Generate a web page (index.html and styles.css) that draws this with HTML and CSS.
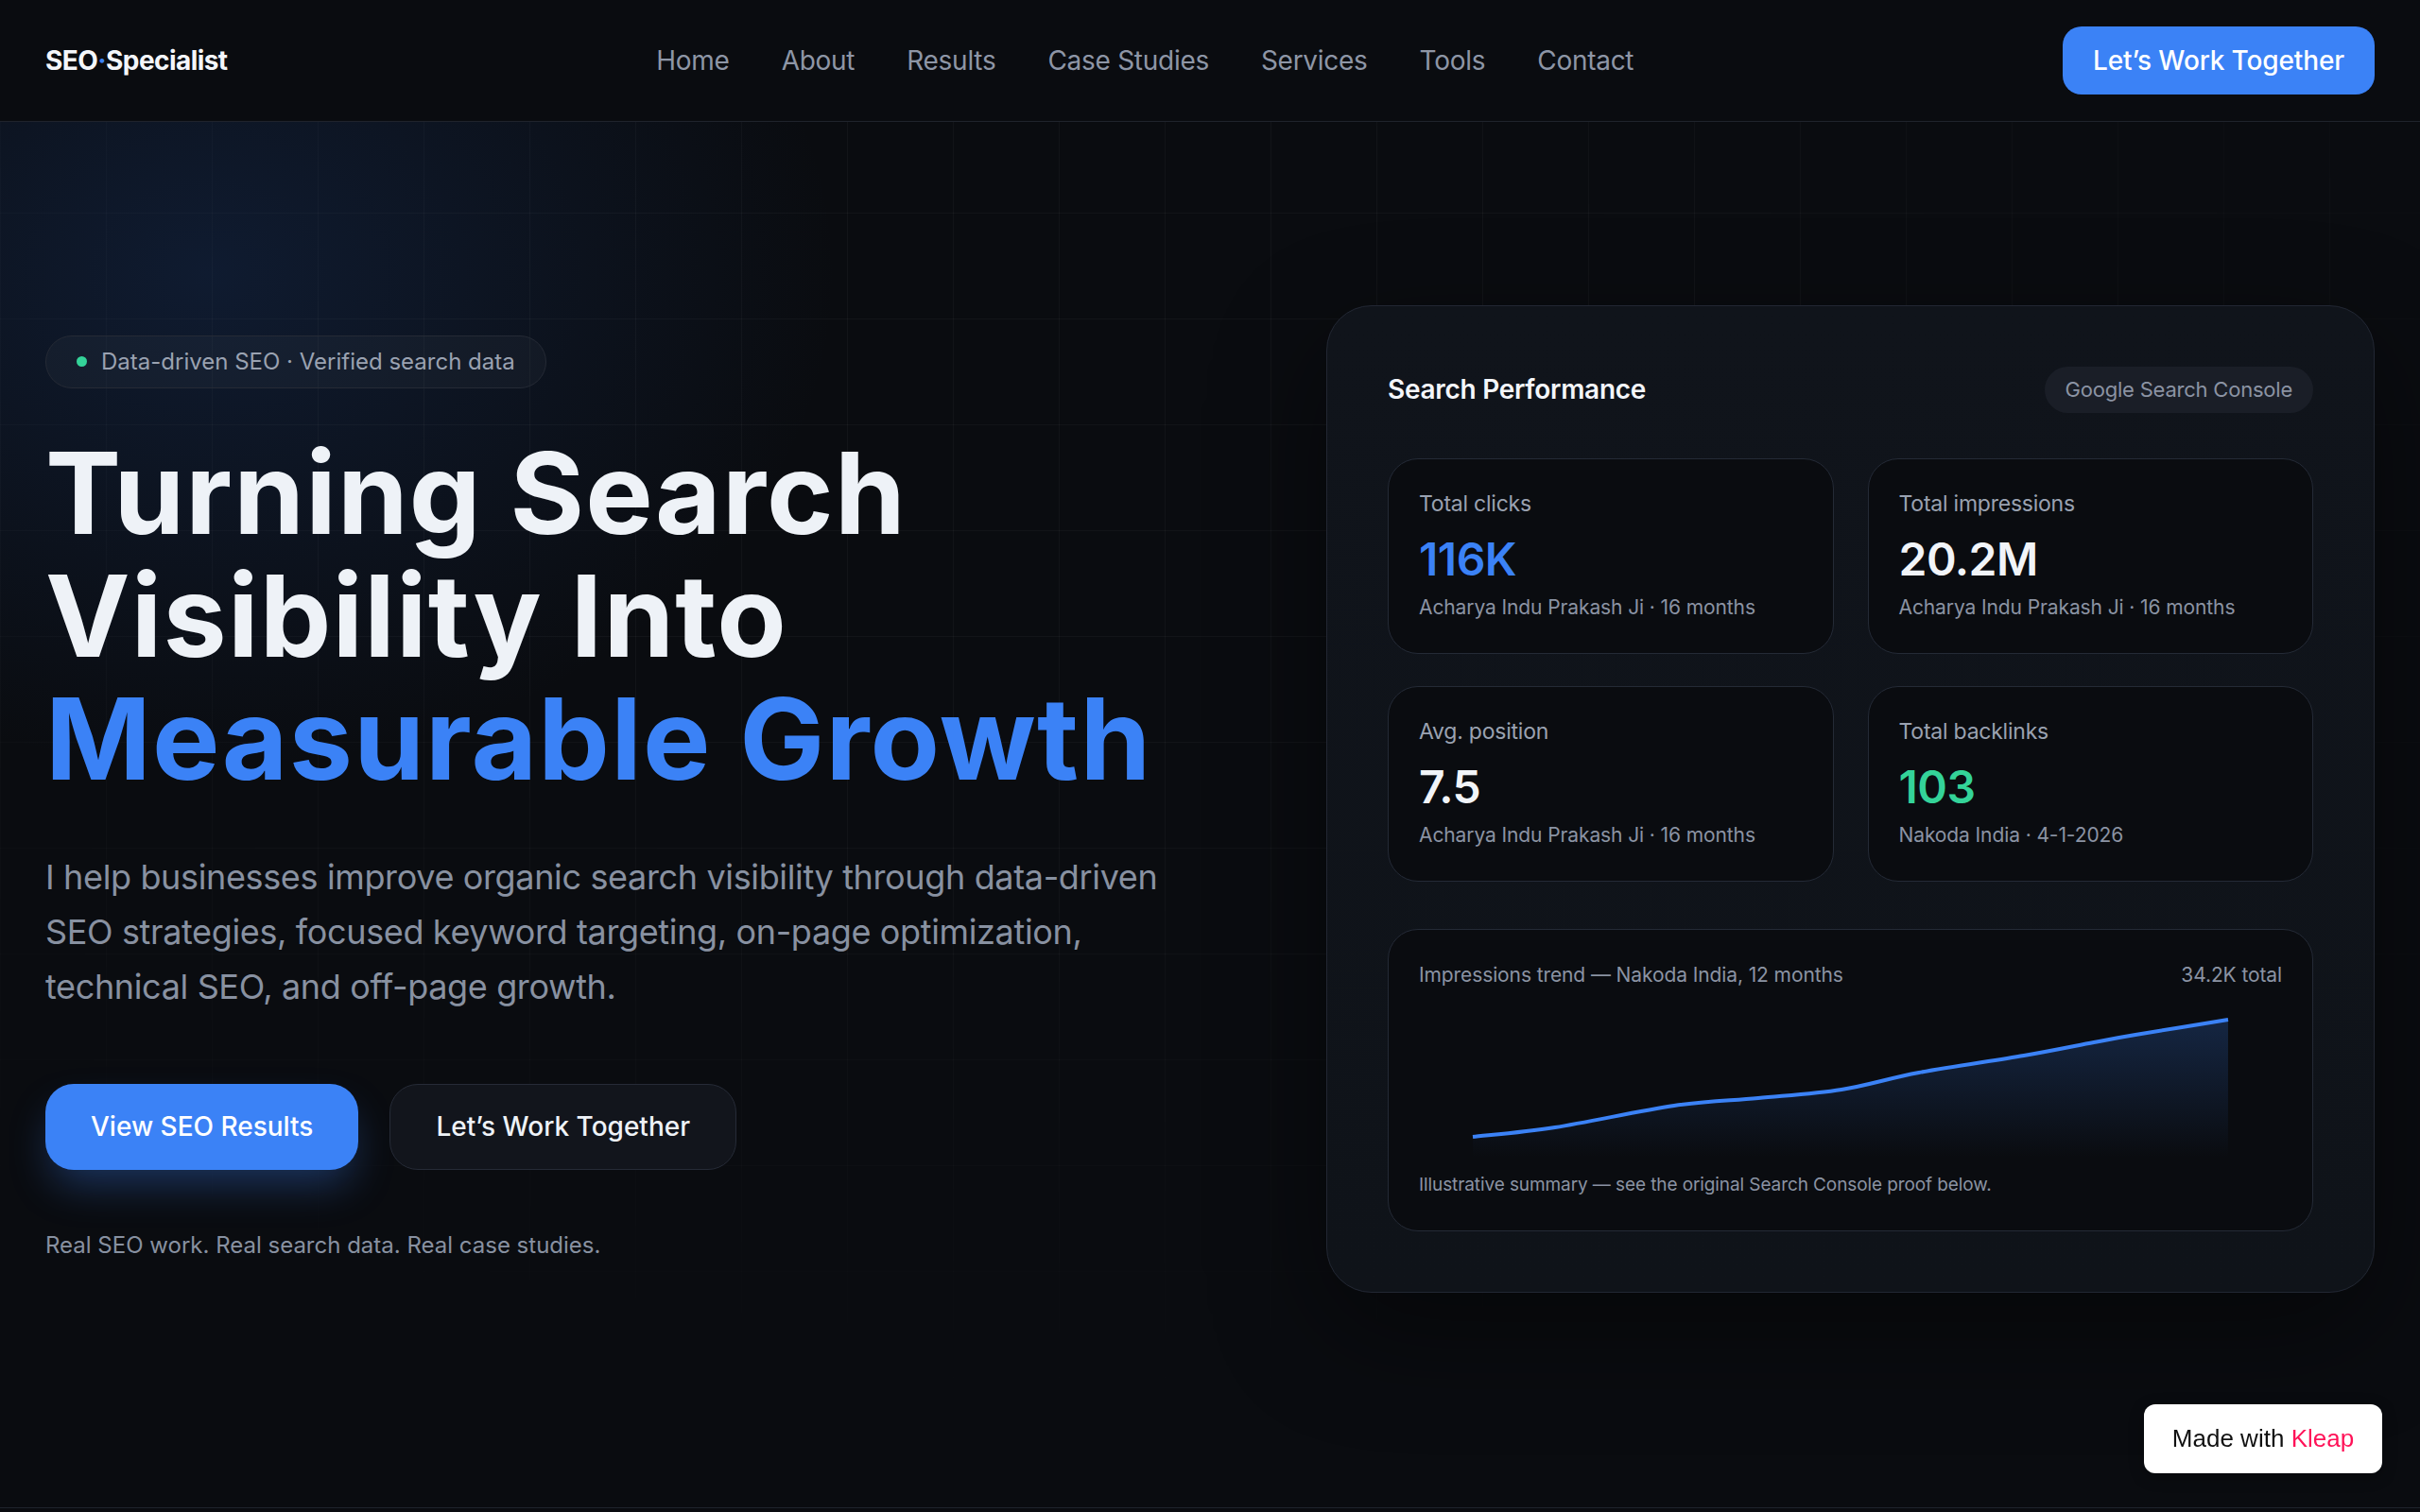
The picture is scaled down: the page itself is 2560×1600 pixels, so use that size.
FILE: index.html
```html
<!DOCTYPE html>
<html lang="en">
<head>
<meta charset="utf-8">
<title>SEO Specialist — Data-driven SEO</title>
<link rel="stylesheet" href="styles.css">
</head>
<body>
<header class="site-header">
  <a class="logo" href="#">SEO<span class="logo-dot">·</span>Specialist</a>
  <nav class="main-nav">
    <a href="#">Home</a>
    <a href="#">About</a>
    <a href="#">Results</a>
    <a href="#">Case Studies</a>
    <a href="#">Services</a>
    <a href="#">Tools</a>
    <a href="#">Contact</a>
  </nav>
  <a class="btn btn-header" href="#">Let’s Work Together</a>
</header>

<main>
  <section class="hero">
    <div class="hero-copy">
      <div class="pill"><span class="pill-dot"></span>Data-driven SEO · Verified search data</div>
      <h1 class="hero-title">Turning Search<br>Visibility Into<br><span class="accent">Measurable Growth</span></h1>
      <p class="hero-lead">I help businesses improve organic search visibility through data-driven SEO strategies, focused keyword targeting, on-page optimization, technical SEO, and off-page growth.</p>
      <div class="hero-actions">
        <a class="btn btn-primary" href="#">View SEO Results</a>
        <a class="btn btn-ghost" href="#">Let’s Work Together</a>
      </div>
      <p class="hero-note">Real SEO work. Real search data. Real case studies.</p>
    </div>

    <div class="perf-card">
      <div class="perf-head">
        <h2 class="perf-title">Search Performance</h2>
        <span class="perf-source">Google Search Console</span>
      </div>
      <div class="stats">
        <div class="stat">
          <div class="stat-label">Total clicks</div>
          <div class="stat-value blue">116K</div>
          <div class="stat-sub">Acharya Indu Prakash Ji · 16 months</div>
        </div>
        <div class="stat">
          <div class="stat-label">Total impressions</div>
          <div class="stat-value">20.2M</div>
          <div class="stat-sub">Acharya Indu Prakash Ji · 16 months</div>
        </div>
        <div class="stat">
          <div class="stat-label">Avg. position</div>
          <div class="stat-value">7.5</div>
          <div class="stat-sub">Acharya Indu Prakash Ji · 16 months</div>
        </div>
        <div class="stat">
          <div class="stat-label">Total backlinks</div>
          <div class="stat-value green">103</div>
          <div class="stat-sub">Nakoda India · 4-1-2026</div>
        </div>
      </div>
      <div class="trend">
        <div class="trend-head">
          <span>Impressions trend — Nakoda India, 12 months</span>
          <span>34.2K total</span>
        </div>
        <svg class="trend-chart" viewBox="0 0 909 170" width="909" height="170" aria-hidden="true">
          <defs>
            <linearGradient id="trendFill" x1="0" y1="0" x2="0" y2="1">
              <stop offset="0" stop-color="#3b82f6" stop-opacity="0.22"/>
              <stop offset="1" stop-color="#3b82f6" stop-opacity="0"/>
            </linearGradient>
          </defs>
          <path fill="url(#trendFill)" d="M55 140 C69.5 138.3 106.5 135.5 142 130 C177.5 124.5 232.2 112.2 268 107 C303.8 101.8 327.5 101.8 357 99 C386.5 96.2 416.7 94.5 445 90 C473.3 85.5 494.8 78 527 72 C559.2 66 607.2 59.3 638 54 C668.8 48.7 692.3 43.7 712 40 C731.7 36.3 732.3 36 756 32 C779.7 28 837.7 18.7 854 16 L854 162 L55 162 Z"/>
          <path fill="none" stroke="#3b82f6" stroke-width="4" stroke-linecap="butt" d="M55 140 C69.5 138.3 106.5 135.5 142 130 C177.5 124.5 232.2 112.2 268 107 C303.8 101.8 327.5 101.8 357 99 C386.5 96.2 416.7 94.5 445 90 C473.3 85.5 494.8 78 527 72 C559.2 66 607.2 59.3 638 54 C668.8 48.7 692.3 43.7 712 40 C731.7 36.3 732.3 36 756 32 C779.7 28 837.7 18.7 854 16"/>
        </svg>
        <p class="trend-foot">Illustrative summary — see the original Search Console proof below.</p>
      </div>
    </div>
  </section>
  <section class="next-section"></section>
</main>

<a class="made-with" href="#">Made with <span>Kleap</span></a>
</body>
</html>
```

FILE: styles.css
```css
* { box-sizing: border-box; }

html, body {
  margin: 0;
  padding: 0;
  background: #0a0c10;
  color: #eef2f7;
  font-family: Inter, "Noto Sans", "Liberation Sans", sans-serif;
  overflow: hidden;
}

a { color: inherit; text-decoration: none; }

/* ---------- header ---------- */
.site-header {
  height: 129px;
  display: flex;
  align-items: center;
  justify-content: space-between;
  padding: 0 48px;
  border-bottom: 1px solid #1f232c;
  background: #0a0c10;
}

.logo {
  font-size: 28px;
  font-weight: 700;
  letter-spacing: -0.02em;
  color: #f4f6fa;
}
.logo-dot { color: #3b82f6; }

.main-nav {
  display: flex;
  gap: 55px;
}
.main-nav a {
  font-size: 28px;
  color: #8e96a6;
  letter-spacing: -0.01em;
}

.btn {
  display: inline-flex;
  align-items: center;
  justify-content: center;
  font-weight: 500;
  white-space: nowrap;
}

.btn-header {
  height: 72px;
  padding: 0 32px;
  border-radius: 20px;
  background: #3b82f6;
  color: #fff;
  font-size: 28px;
  letter-spacing: -0.005em;
}

/* ---------- hero ---------- */
.hero {
  position: relative;
  height: 1466px;
  padding: 0 48px 34px;
  display: grid;
  grid-template-columns: 1fr 1109px;
  column-gap: 128px;
  align-items: center;
  background:
    radial-gradient(ellipse 950px 750px at 220px 160px, rgba(30, 70, 140, 0.26), rgba(30, 70, 140, 0) 70%),
    #0a0c10;
}

/* faint square grid behind the hero content */
.hero::before {
  content: "";
  position: absolute;
  inset: 0;
  background-image:
    linear-gradient(to right, rgba(255, 255, 255, 0.035) 1px, transparent 1px),
    linear-gradient(to bottom, rgba(255, 255, 255, 0.035) 1px, transparent 1px);
  background-size: 112px 112px;
  background-position: 0 96px;
  -webkit-mask-image: radial-gradient(ellipse 75% 70% at 45% 25%, #000 35%, transparent 100%);
  mask-image: radial-gradient(ellipse 75% 70% at 45% 25%, #000 35%, transparent 100%);
  pointer-events: none;
}

.hero > * { position: relative; }

.hero-copy {
  display: flex;
  flex-direction: column;
  align-items: flex-start;
}

.pill {
  display: inline-flex;
  align-items: center;
  gap: 15px;
  height: 56px;
  padding: 0 32px;
  border-radius: 999px;
  border: 1px solid #252a35;
  background: rgba(255, 255, 255, 0.03);
  color: #9aa2b1;
  font-size: 24px;
}
.pill-dot {
  width: 11px;
  height: 11px;
  border-radius: 50%;
  background: #34d399;
}

.hero-title {
  margin: 46px 0 0;
  font-size: 120px;
  line-height: 130px;
  font-weight: 700;
  letter-spacing: 0.01em;
  color: #eef2f7;
}
.hero-title .accent { color: #3b82f6; }

.hero-lead {
  margin: 52px 0 0;
  max-width: 1210px;
  font-size: 36px;
  line-height: 58px;
  color: #8891a1;
  letter-spacing: -0.01em;
}

.hero-actions {
  display: flex;
  gap: 33px;
  margin-top: 74px;
}

.btn-primary,
.btn-ghost {
  height: 91px;
  padding: 0 48px;
  border-radius: 30px;
  font-size: 28px;
}
.btn-primary {
  background: #3b82f6;
  color: #fff;
  box-shadow: 0 22px 44px -8px rgba(59, 130, 246, 0.35);
}
.btn-ghost {
  background: #12151c;
  border: 1px solid #262b37;
  color: #eef2f7;
}

.hero-note {
  margin: 62px 0 0;
  font-size: 24px;
  line-height: 36px;
  color: #8891a1;
}

/* ---------- performance card ---------- */
.perf-card {
  width: 1109px;
  padding: 64px;
  border: 1px solid #222733;
  border-radius: 48px;
  background: linear-gradient(180deg, #10141b 0%, #0f1319 100%);
  box-shadow: 0 40px 120px rgba(0, 0, 0, 0.45);
}

.perf-head {
  display: flex;
  align-items: center;
  justify-content: space-between;
  height: 49px;
}
.perf-title {
  margin: 0;
  font-size: 28px;
  font-weight: 600;
  letter-spacing: -0.01em;
  color: #f4f6fa;
}
.perf-source {
  display: inline-flex;
  align-items: center;
  height: 49px;
  padding: 0 22px;
  border-radius: 999px;
  background: #1a1e27;
  color: #8b93a3;
  font-size: 22px;
  letter-spacing: -0.01em;
}

.stats {
  display: grid;
  grid-template-columns: 1fr 1fr;
  column-gap: 36px;
  row-gap: 34px;
  margin-top: 48px;
}

.stat {
  height: 207px;
  padding: 30px 32px 0;
  border: 1px solid #242a36;
  border-radius: 32px;
  background: #0a0c10;
}
.stat-label {
  font-size: 23px;
  line-height: 34px;
  color: #9aa2b1;
  letter-spacing: -0.01em;
}
.stat-value {
  margin-top: 15px;
  font-size: 48px;
  line-height: 53px;
  font-weight: 600;
  letter-spacing: -0.01em;
  color: #f1f4f8;
}
.stat-value.blue { color: #3b82f6; }
.stat-value.green { color: #34d399; }
.stat-sub {
  margin-top: 9px;
  font-size: 21px;
  line-height: 32px;
  color: #8b93a3;
  letter-spacing: -0.005em;
}

.trend {
  margin-top: 50px;
  padding: 32px 32px 34px;
  border: 1px solid #242a36;
  border-radius: 32px;
  background: #0a0c10;
}
.trend-head {
  display: flex;
  justify-content: space-between;
  font-size: 21px;
  line-height: 32px;
  color: #8b93a3;
  letter-spacing: -0.005em;
}
.trend-chart {
  display: block;
  width: 100%;
  height: 170px;
  margin-top: 15px;
}
.trend-foot {
  margin: 7px 0 0;
  font-size: 19px;
  line-height: 28px;
  color: #8b93a3;
  letter-spacing: -0.005em;
}

.next-section {
  border-top: 1px solid #1f232c;
  height: 40px;
}

/* ---------- floating badge ---------- */
.made-with {
  position: fixed;
  right: 40px;
  bottom: 41px;
  display: flex;
  align-items: center;
  justify-content: center;
  width: 252px;
  height: 73px;
  border-radius: 12px;
  background: #fff;
  color: #111;
  font-family: "Liberation Sans", Arial, sans-serif;
  font-size: 26px;
  box-shadow: 0 4px 16px rgba(0, 0, 0, 0.3);
}
.made-with span { color: #ff1258; margin-left: 0.28em; }
```
